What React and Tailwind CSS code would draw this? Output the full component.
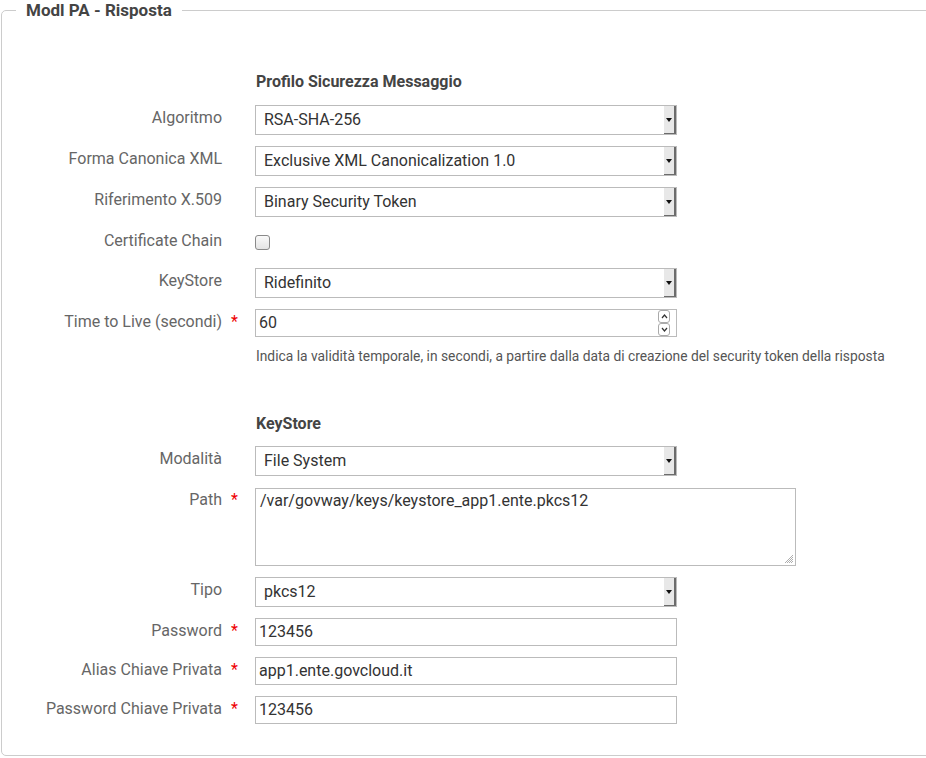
import React from 'react'

const font = { fontFamily: 'Roboto, "Open Sans", sans-serif' }

function Label({ text, required }) {
  return (
    <>
      <div className="w-[220px] shrink-0 pt-[3px] text-right text-[16px] leading-5 text-[#666]">{text}</div>
      <div className="w-[33px] shrink-0 pt-[3px] pl-[9px] text-[16px] leading-5 text-[#e00]">{required ? '*' : ''}</div>
    </>
  )
}

function Select({ value }) {
  return (
    <div className="flex h-[30px] w-[422px] border border-[#bbb] bg-white">
      <div className="flex-1 pl-[8px] text-[16px] leading-[28px] text-[#333]">{value}</div>
      <div className="flex w-[12px] items-center justify-center border-b border-r-2 border-[#6c6c6c] bg-[#e8e8e8]">
        <svg width="6" height="4" viewBox="0 0 6 4">
          <path d="M0 0h6L3 4z" fill="#111" />
        </svg>
      </div>
    </div>
  )
}

function TextInput({ value, children }) {
  return (
    <div className="flex h-[28px] w-[422px] items-center border border-[#bbb] bg-white">
      <div className="flex-1 pl-[3px] text-[16px] leading-[26px] text-[#333]">{value}</div>
      {children}
    </div>
  )
}

function Row({ label, required, children }) {
  return (
    <div className="flex items-start">
      <Label text={label} required={required} />
      {children}
    </div>
  )
}

function Spinner() {
  return (
    <div className="mr-[6px] flex flex-col">
      <div className="flex h-[13px] w-[12px] items-center justify-center rounded-[3px] border border-[#aaa] bg-white">
        <svg width="7" height="5" viewBox="0 0 7 5">
          <path d="M1 4l2.5-3L6 4" stroke="#333" strokeWidth="1.2" fill="none" />
        </svg>
      </div>
      <div className="flex h-[13px] w-[12px] items-center justify-center rounded-[3px] border border-[#aaa] bg-white">
        <svg width="7" height="5" viewBox="0 0 7 5">
          <path d="M1 1l2.5 3L6 1" stroke="#333" strokeWidth="1.2" fill="none" />
        </svg>
      </div>
    </div>
  )
}

export default function App() {
  return (
    <div className="h-[758px] w-[926px] overflow-hidden bg-white" style={font}>
      <fieldset className="ml-[1px] h-[756px] w-[960px] rounded-[5px] border border-[#ccc] p-0">
        <legend className="ml-[14px] px-[10px] text-[17px] font-bold leading-5 text-[#444]">Modl PA - Risposta</legend>

        <div className="pt-[52px]">
          <div className="pl-[254px] text-[16px] font-bold leading-5 text-[#444]">Profilo Sicurezza Messaggio</div>

          <div className="mt-[13px] flex flex-col gap-[11px]">
            <Row label="Algoritmo"><Select value="RSA-SHA-256" /></Row>
            <Row label="Forma Canonica XML"><Select value="Exclusive XML Canonicalization 1.0" /></Row>
            <Row label="Riferimento X.509"><Select value="Binary Security Token" /></Row>
            <div className="flex h-[29px] items-start">
              <Label text="Certificate Chain" />
              <div className="mt-[7px] h-[15px] w-[15px] rounded-[3px] border border-[#8a8a8a] bg-gradient-to-b from-[#fafafa] to-[#e4e4e4]" />
            </div>
            <Row label="KeyStore"><Select value="Ridefinito" /></Row>
            <div>
              <Row label="Time to Live (secondi)" required>
                <TextInput value="60"><Spinner /></TextInput>
              </Row>
              <div className="mt-[11px] pl-[254px] text-[13.8px] leading-4 text-[#555]">
                Indica la validità temporale, in secondi, a partire dalla data di creazione del security token della risposta
              </div>
            </div>
          </div>

          <div className="mt-[50px] pl-[254px] text-[16px] font-bold leading-5 text-[#444]">KeyStore</div>

          <div className="mt-[12px] flex flex-col gap-[11px]">
            <Row label="Modalità"><Select value="File System" /></Row>
            <Row label="Path" required>
              <div className="relative mt-px h-[78px] w-[541px] border border-[#bbb] bg-white">
                <div className="pl-[4px] pt-[2px] text-[16px] leading-5 text-[#333]">/var/govway/keys/keystore_app1.ente.pkcs12</div>
                <svg className="absolute bottom-[1px] right-[1px]" width="9" height="9" viewBox="0 0 9 9">
                  <path d="M8 2L2 8M8 4L4 8M8 6L6 8M8 0L0 8" stroke="#999" strokeWidth="0.8" />
                </svg>
              </div>
            </Row>
            <Row label="Tipo"><Select value="pkcs12" /></Row>
            <Row label="Password" required><TextInput value="123456" /></Row>
            <Row label="Alias Chiave Privata" required><TextInput value="app1.ente.govcloud.it" /></Row>
            <Row label="Password Chiave Privata" required><TextInput value="123456" /></Row>
          </div>
        </div>
      </fieldset>
    </div>
  )
}
